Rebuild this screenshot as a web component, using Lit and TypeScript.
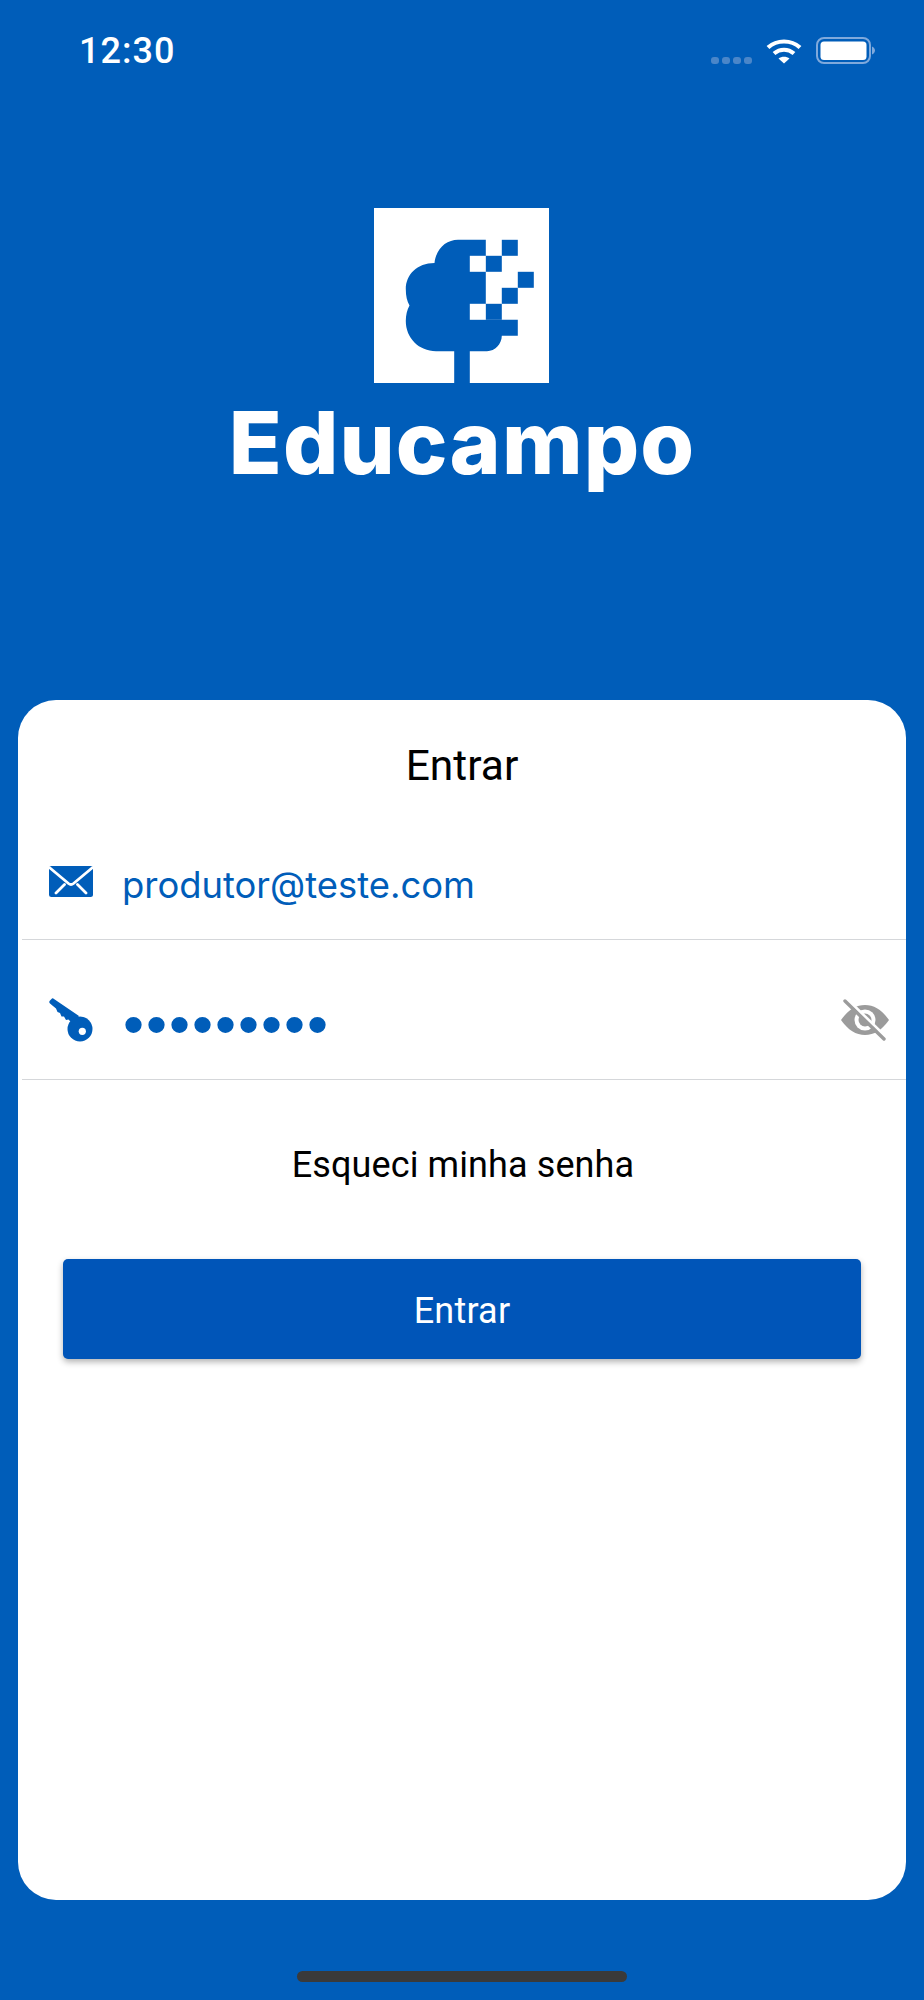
import { LitElement, html, css } from 'lit'
import { customElement } from 'lit/decorators.js'

@customElement('app-root')
export class AppRoot extends LitElement {
  static styles = css`
    :host {
      display: block;
      width: 924px;
      height: 2000px;
      background: #005db9;
      font-family: Roboto, sans-serif;
      overflow: hidden;
    }

    .status {
      display: flex;
      align-items: flex-start;
      justify-content: space-between;
      height: 100px;
      box-sizing: border-box;
      padding: 30px 48px 0 79px;
    }

    .time {
      color: #fff;
      font-size: 36px;
      line-height: 42px;
      font-weight: 500;
      letter-spacing: 1px;
    }

    .indicators {
      display: flex;
      align-items: flex-end;
      padding-top: 7px;
    }

    .signal {
      display: flex;
      gap: 3px;
      margin-right: 14px;
    }

    .signal i {
      display: block;
      width: 8px;
      height: 7px;
      border-radius: 3px;
      background: #4a86c9;
    }

    .wifi {
      display: block;
      margin-right: 14px;
    }

    .battery {
      display: block;
    }

    .brand {
      display: flex;
      flex-direction: column;
      align-items: center;
      padding-top: 108px;
      height: 600px;
      box-sizing: border-box;
      color: #fff;
    }

    .mark {
      display: block;
      flex: none;
      margin-right: 2px;
    }

    .wordmark {
      font-family: Inter, sans-serif;
      font-weight: 800;
      font-size: 87px;
      line-height: 100px;
      letter-spacing: 1.1px;
      margin-top: 10px;
    }

    .card {
      margin: 0 18px;
      height: 1200px;
      box-sizing: border-box;
      background: #fff;
      border-radius: 38px;
      padding-top: 41px;
    }

    .title {
      margin: 0;
      text-align: center;
      font-size: 42.5px;
      line-height: 50px;
      font-weight: 400;
      color: #000;
    }

    .field {
      display: flex;
      align-items: center;
      height: 140px;
      box-sizing: border-box;
      margin-left: 4px;
      border-bottom: 1.5px solid #d5d7da;
      padding: 21px 0 0 27px;
      color: #005db9;
    }

    .field.first {
      height: 149px;
      padding-top: 33px;
    }

    .email {
      font-family: Inter, sans-serif;
      font-size: 36.4px;
      line-height: 44px;
      margin-left: 29px;
      padding-top: 6px;
    }

    .password {
      font-family: 'Liberation Sans', sans-serif;
      font-size: 60px;
      line-height: 44px;
      letter-spacing: 2px;
      margin-left: 30px;
      padding-top: 9px;
      flex: 1;
    }

    .eye {
      display: block;
      margin-right: 14px;
    }

    .forgot {
      text-align: center;
      font-size: 36px;
      line-height: 44px;
      letter-spacing: 0.1px;
      color: #000;
      margin-top: 63px;
      padding-left: 2px;
    }

    .submit {
      display: block;
      width: 798px;
      height: 100px;
      margin: 72px 0 0 45px;
      padding: 3px 0 0;
      border: 0;
      border-radius: 5px;
      background: #0055b8;
      color: #fff;
      font: inherit;
      font-size: 36px;
      letter-spacing: 0.2px;
      box-shadow: 0 3px 6px rgba(0, 0, 0, 0.3);
    }

    .home {
      width: 330px;
      height: 11px;
      margin: 71px auto 0;
      border-radius: 6px;
      background: #3a3a3a;
    }
  `

  renderStatus() {
    return html`
      <div class="status">
        <span class="time">12:30</span>
        <div class="indicators">
          <div class="signal"><i></i><i></i><i></i><i></i></div>
          <svg class="wifi" width="36" height="27" viewBox="0 0 36 27" fill="none" stroke="#fff" stroke-width="4.2">
            <path d="M2 10.5C11 2.5 25 2.5 34 10.5" />
            <path d="M8 16.5C14 11.5 22 11.5 28 16.5" />
            <path d="M18 26.5L12.5 21.5C15.5 19 20.5 19 23.5 21.5Z" fill="#fff" stroke="none" />
          </svg>
          <svg class="battery" width="60" height="27" viewBox="0 0 60 27">
            <rect x="1" y="1" width="53" height="25" rx="7" fill="none" stroke="#7fa9dc" stroke-width="2" />
            <rect x="4.5" y="4.5" width="46" height="18.5" rx="3.5" fill="#fff" />
            <path d="M56 9.5C58 10.5 59 12 59 13.5C59 15 58 16.5 56 17.5Z" fill="#7fa9dc" />
          </svg>
        </div>
      </div>
    `
  }

  renderBrand() {
    return html`
      <div class="brand">
        <svg class="mark" width="175" height="175" viewBox="0 0 175 175">
          <rect width="175" height="175" fill="#fff" />
          <g fill="#005db9">
            <path
              d="M111.8 31.8H84C72 31.8 62 41 60.5 55C43 55 31.8 67 31.8 81C31.8 88 33 93 35.5 97.5C33 102 31.8 107 31.8 113C31.8 130 45 143.2 62 143.2H113C121 143.2 127.8 136 127.8 127.8H143.8V111.8H111.8Z"
            />
            <rect x="80.2" y="143" width="15.6" height="32" />
            <rect x="127.8" y="31.8" width="16" height="16" />
            <rect x="111.8" y="47.8" width="16" height="16" />
            <rect x="143.8" y="63.8" width="16" height="16" />
            <rect x="127.8" y="79.8" width="16" height="16" />
            <rect x="111.8" y="95.8" width="16" height="16" />
          </g>
          <rect x="95.8" y="47.8" width="16" height="16" fill="#fff" />
          <rect x="95.8" y="95.8" width="16" height="16" fill="#fff" />
        </svg>
        <div class="wordmark">Educampo</div>
      </div>
    `
  }

  render() {
    return html`
      ${this.renderStatus()} ${this.renderBrand()}
      <div class="card">
        <h1 class="title">Entrar</h1>
        <div class="field first">
          <svg width="44" height="31" viewBox="0 0 44 31">
            <rect width="44" height="31" rx="2.5" fill="#005db9" />
            <path
              d="M1 2L19.5 17.5Q22 19.5 24.5 17.5L43 2M7 27L15.5 18.5M37 27L28.5 18.5"
              fill="none"
              stroke="#fff"
              stroke-width="2.8"
              stroke-linecap="round"
            />
          </svg>
          <span class="email">produtor@teste.com</span>
        </div>
        <div class="field">
          <svg width="44" height="44" viewBox="0 0 44 44" fill="#005db9">
            <path
              d="M3 .5Q4 0 5 1L30 18L24 26L19.5 21.5L17 22L15 18.5L12.5 18.5L11 15L8.5 14L7 10.5L1 5.5Q-.5 4 1 2.5Z"
            />
            <circle cx="31" cy="31" r="12.5" />
            <circle cx="33.3" cy="33.3" r="3.6" fill="#fff" />
          </svg>
          <span class="password">•••••••••</span>
          <svg class="eye" width="54" height="46" viewBox="0 0 54 46">
            <path d="M3 23C10 13 18 8 27 8C36 8 44 13 51 23C44 33 36 38 27 38C18 38 10 33 3 23Z" fill="#9b9b9b" />
            <circle cx="27" cy="23" r="10.5" fill="#fff" />
            <circle cx="27" cy="23" r="6.5" fill="#9b9b9b" />
            <path d="M10 3L49 41" stroke="#fff" stroke-width="3" />
            <path d="M7 4L46 42" stroke="#9b9b9b" stroke-width="3.4" stroke-linecap="round" />
          </svg>
        </div>
        <div class="forgot">Esqueci minha senha</div>
        <button class="submit" type="button">Entrar</button>
      </div>
      <div class="home"></div>
    `
  }
}
